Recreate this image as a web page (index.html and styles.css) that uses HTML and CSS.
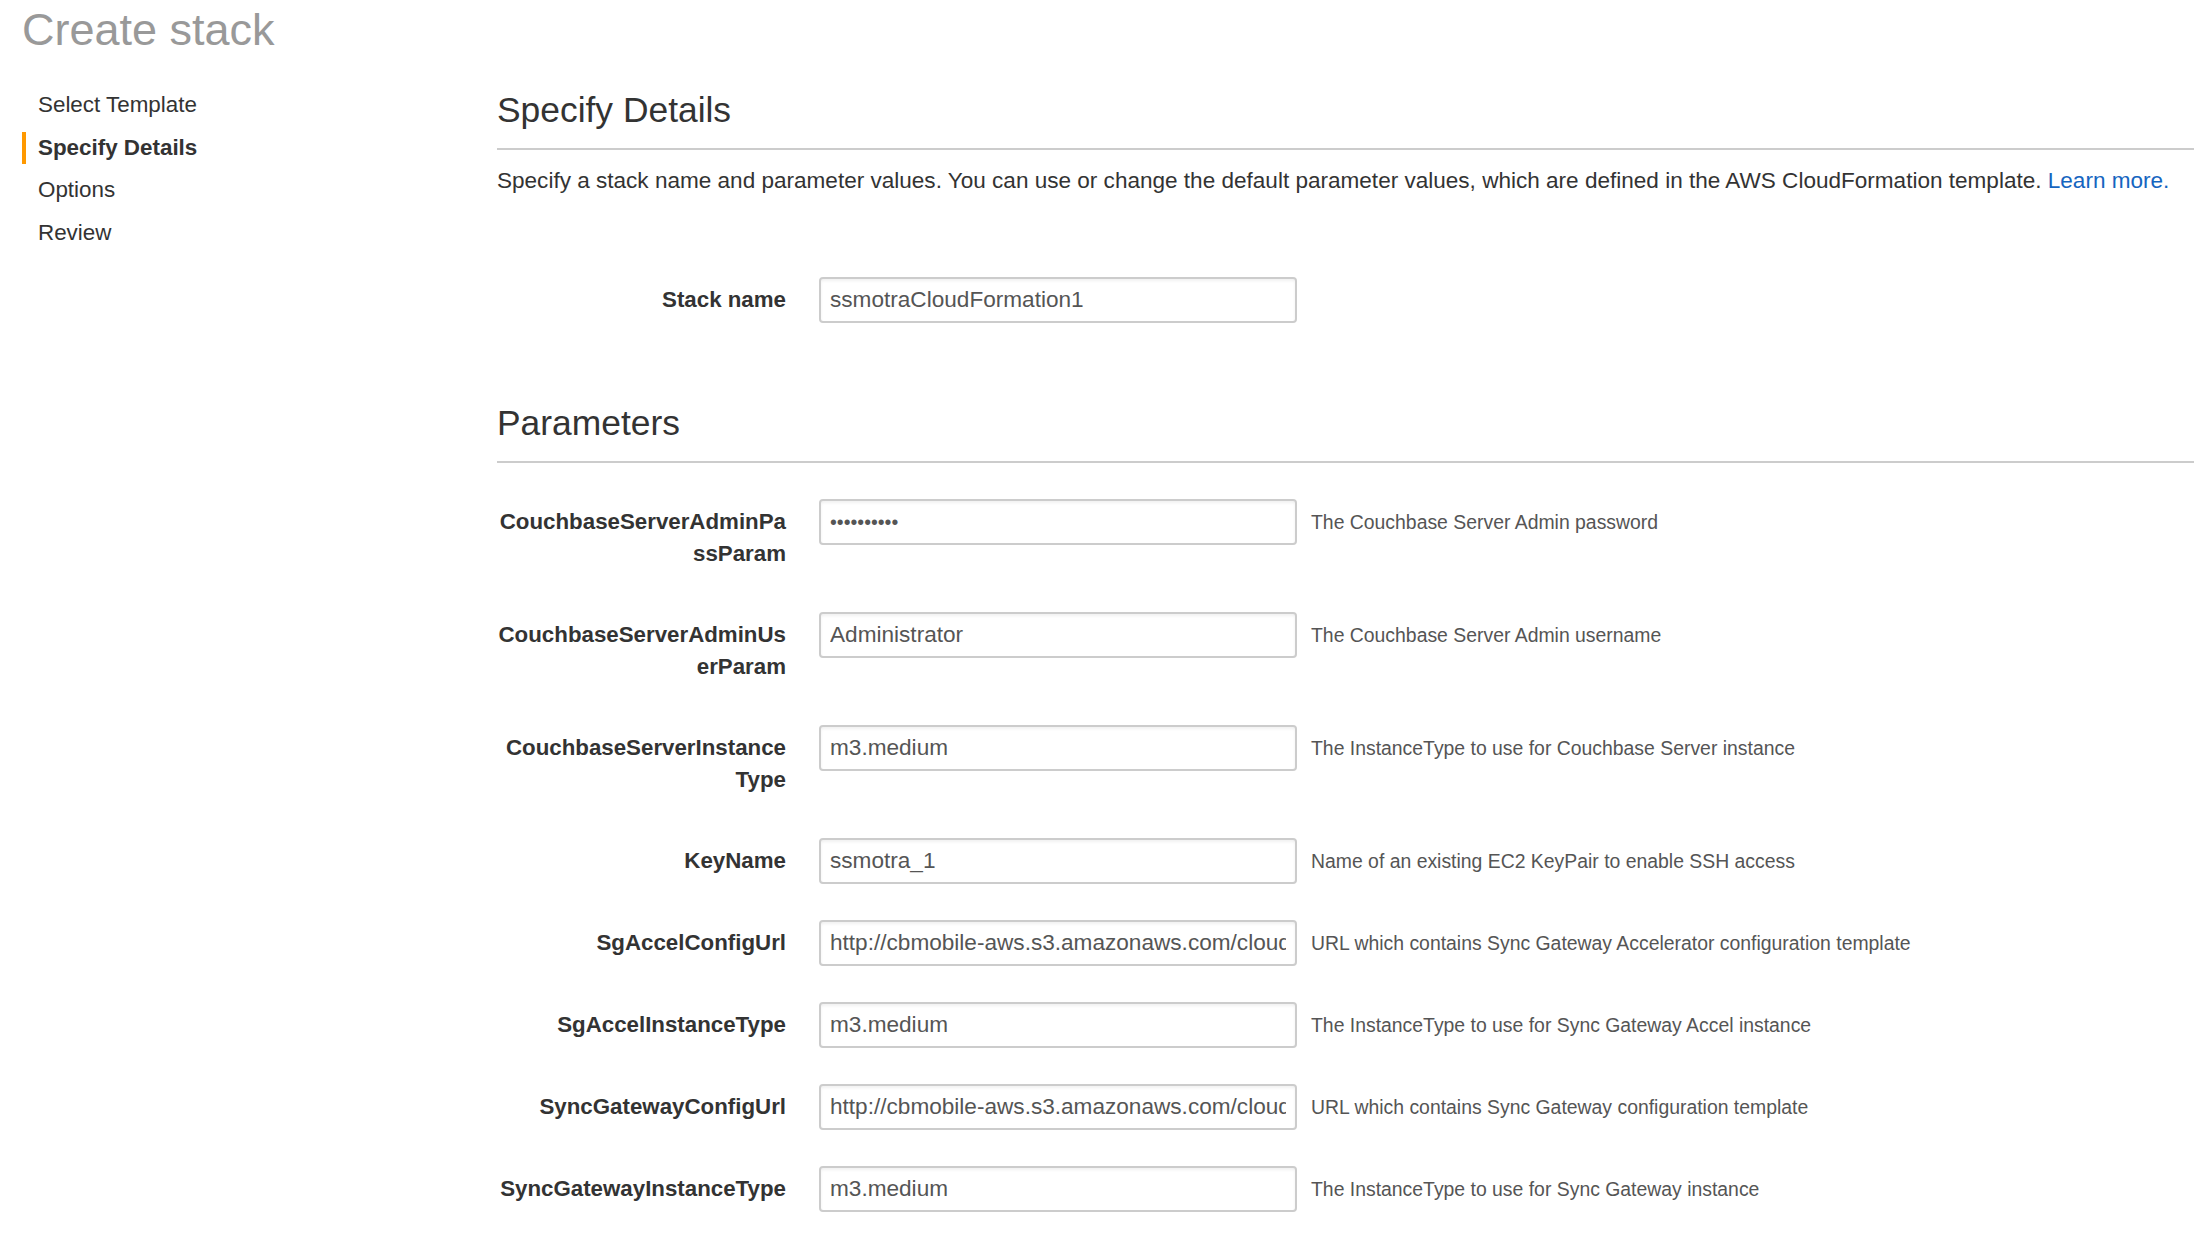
FILE: index.html
```html
<!DOCTYPE html>
<html lang="en">
<head>
<meta charset="utf-8">
<title>Create stack</title>
<link rel="stylesheet" href="styles.css">
</head>
<body>
<div class="page">
  <h1 class="title">Create stack</h1>
  <div class="layout">
    <nav class="steps">
      <div class="step">Select Template</div>
      <div class="step active">Specify Details</div>
      <div class="step">Options</div>
      <div class="step">Review</div>
    </nav>
    <main class="main">
      <h2 class="section-title">Specify Details</h2>
      <p class="desc">Specify a stack name and parameter values. You can use or change the default parameter values, which are defined in the AWS CloudFormation template. <a class="link" href="#">Learn more.</a></p>

      <div class="field stack-field">
        <label class="label">Stack name</label>
        <input class="input" type="text" value="ssmotraCloudFormation1">
      </div>

      <h2 class="section-title params-title">Parameters</h2>

      <div class="params">
        <div class="field">
          <label class="label">CouchbaseServerAdminPa<br>ssParam</label>
          <input class="input pw" type="password" value="abcdefghij">
          <span class="help">The Couchbase Server Admin password</span>
        </div>
        <div class="field">
          <label class="label">CouchbaseServerAdminUs<br>erParam</label>
          <input class="input" type="text" value="Administrator">
          <span class="help">The Couchbase Server Admin username</span>
        </div>
        <div class="field">
          <label class="label">CouchbaseServerInstance<br>Type</label>
          <input class="input" type="text" value="m3.medium">
          <span class="help">The InstanceType to use for Couchbase Server instance</span>
        </div>
        <div class="field">
          <label class="label">KeyName</label>
          <input class="input" type="text" value="ssmotra_1">
          <span class="help">Name of an existing EC2 KeyPair to enable SSH access</span>
        </div>
        <div class="field">
          <label class="label">SgAccelConfigUrl</label>
          <input class="input" type="text" value="http://cbmobile-aws.s3.amazonaws.com/cloudformation/sg_accel_config.json">
          <span class="help">URL which contains Sync Gateway Accelerator configuration template</span>
        </div>
        <div class="field">
          <label class="label">SgAccelInstanceType</label>
          <input class="input" type="text" value="m3.medium">
          <span class="help">The InstanceType to use for Sync Gateway Accel instance</span>
        </div>
        <div class="field">
          <label class="label">SyncGatewayConfigUrl</label>
          <input class="input" type="text" value="http://cbmobile-aws.s3.amazonaws.com/cloudformation/sync_gateway_config.json">
          <span class="help">URL which contains Sync Gateway configuration template</span>
        </div>
        <div class="field">
          <label class="label">SyncGatewayInstanceType</label>
          <input class="input" type="text" value="m3.medium">
          <span class="help">The InstanceType to use for Sync Gateway instance</span>
        </div>
      </div>
    </main>
  </div>
</div>
</body>
</html>
```

FILE: styles.css
```css
html, body {
  margin: 0;
  padding: 0;
  background: #ffffff;
}

body {
  font-family: "Liberation Sans", Arial, Helvetica, sans-serif;
  color: #333333;
}

.page {
  padding: 8px 0 0 22px;
}

.title {
  margin: 0;
  font-size: 45px;
  line-height: 44px;
  font-weight: normal;
  color: #999999;
}

.layout {
  display: flex;
  margin-top: 37px;
}

.steps {
  flex: none;
  width: 475px;
  display: flex;
  flex-direction: column;
  gap: 10.5px;
}

.step {
  height: 32px;
  line-height: 32px;
  font-size: 22.4px;
  color: #333333;
  padding-left: 12px;
  border-left: 4px solid transparent;
}

.step.active {
  font-weight: bold;
  border-left-color: #ff9900;
}

.main {
  flex: 1;
  min-width: 0;
}

.section-title {
  margin: 1px 0 0;
  font-size: 35.4px;
  line-height: 40px;
  font-weight: normal;
  color: #333333;
  padding-bottom: 18px;
  border-bottom: 2px solid #cccccc;
}

.params-title {
  margin-top: 80px;
}

.desc {
  margin: 15px 0 0;
  font-size: 22.55px;
  line-height: 32px;
  color: #333333;
}

.link {
  color: #1565c0;
  text-decoration: none;
}

.field {
  display: flex;
  align-items: flex-start;
}

.stack-field {
  margin-top: 80px;
}

.params {
  margin-top: 36px;
  display: flex;
  flex-direction: column;
  gap: 36px;
}

.label {
  flex: none;
  width: 289px;
  text-align: right;
  font-weight: bold;
  font-size: 22.3px;
  line-height: 32px;
  padding: 7px 0 6px;
  color: #333333;
  white-space: nowrap;
}

.input {
  flex: none;
  box-sizing: border-box;
  width: 478px;
  height: 46px;
  margin: 0 0 0 33px;
  padding: 0 9px;
  border: 2px solid #cccccc;
  border-radius: 4px;
  background: #ffffff;
  box-shadow: inset 0 2px 3px rgba(0, 0, 0, 0.06);
  font-family: "Liberation Sans", Arial, Helvetica, sans-serif;
  font-size: 22.6px;
  color: #555555;
  outline: none;
}

.input.pw {
  font-size: 19.5px;
}

.help {
  margin-left: 14px;
  font-size: 19.4px;
  line-height: 46px;
  color: #555555;
  white-space: nowrap;
}
```
